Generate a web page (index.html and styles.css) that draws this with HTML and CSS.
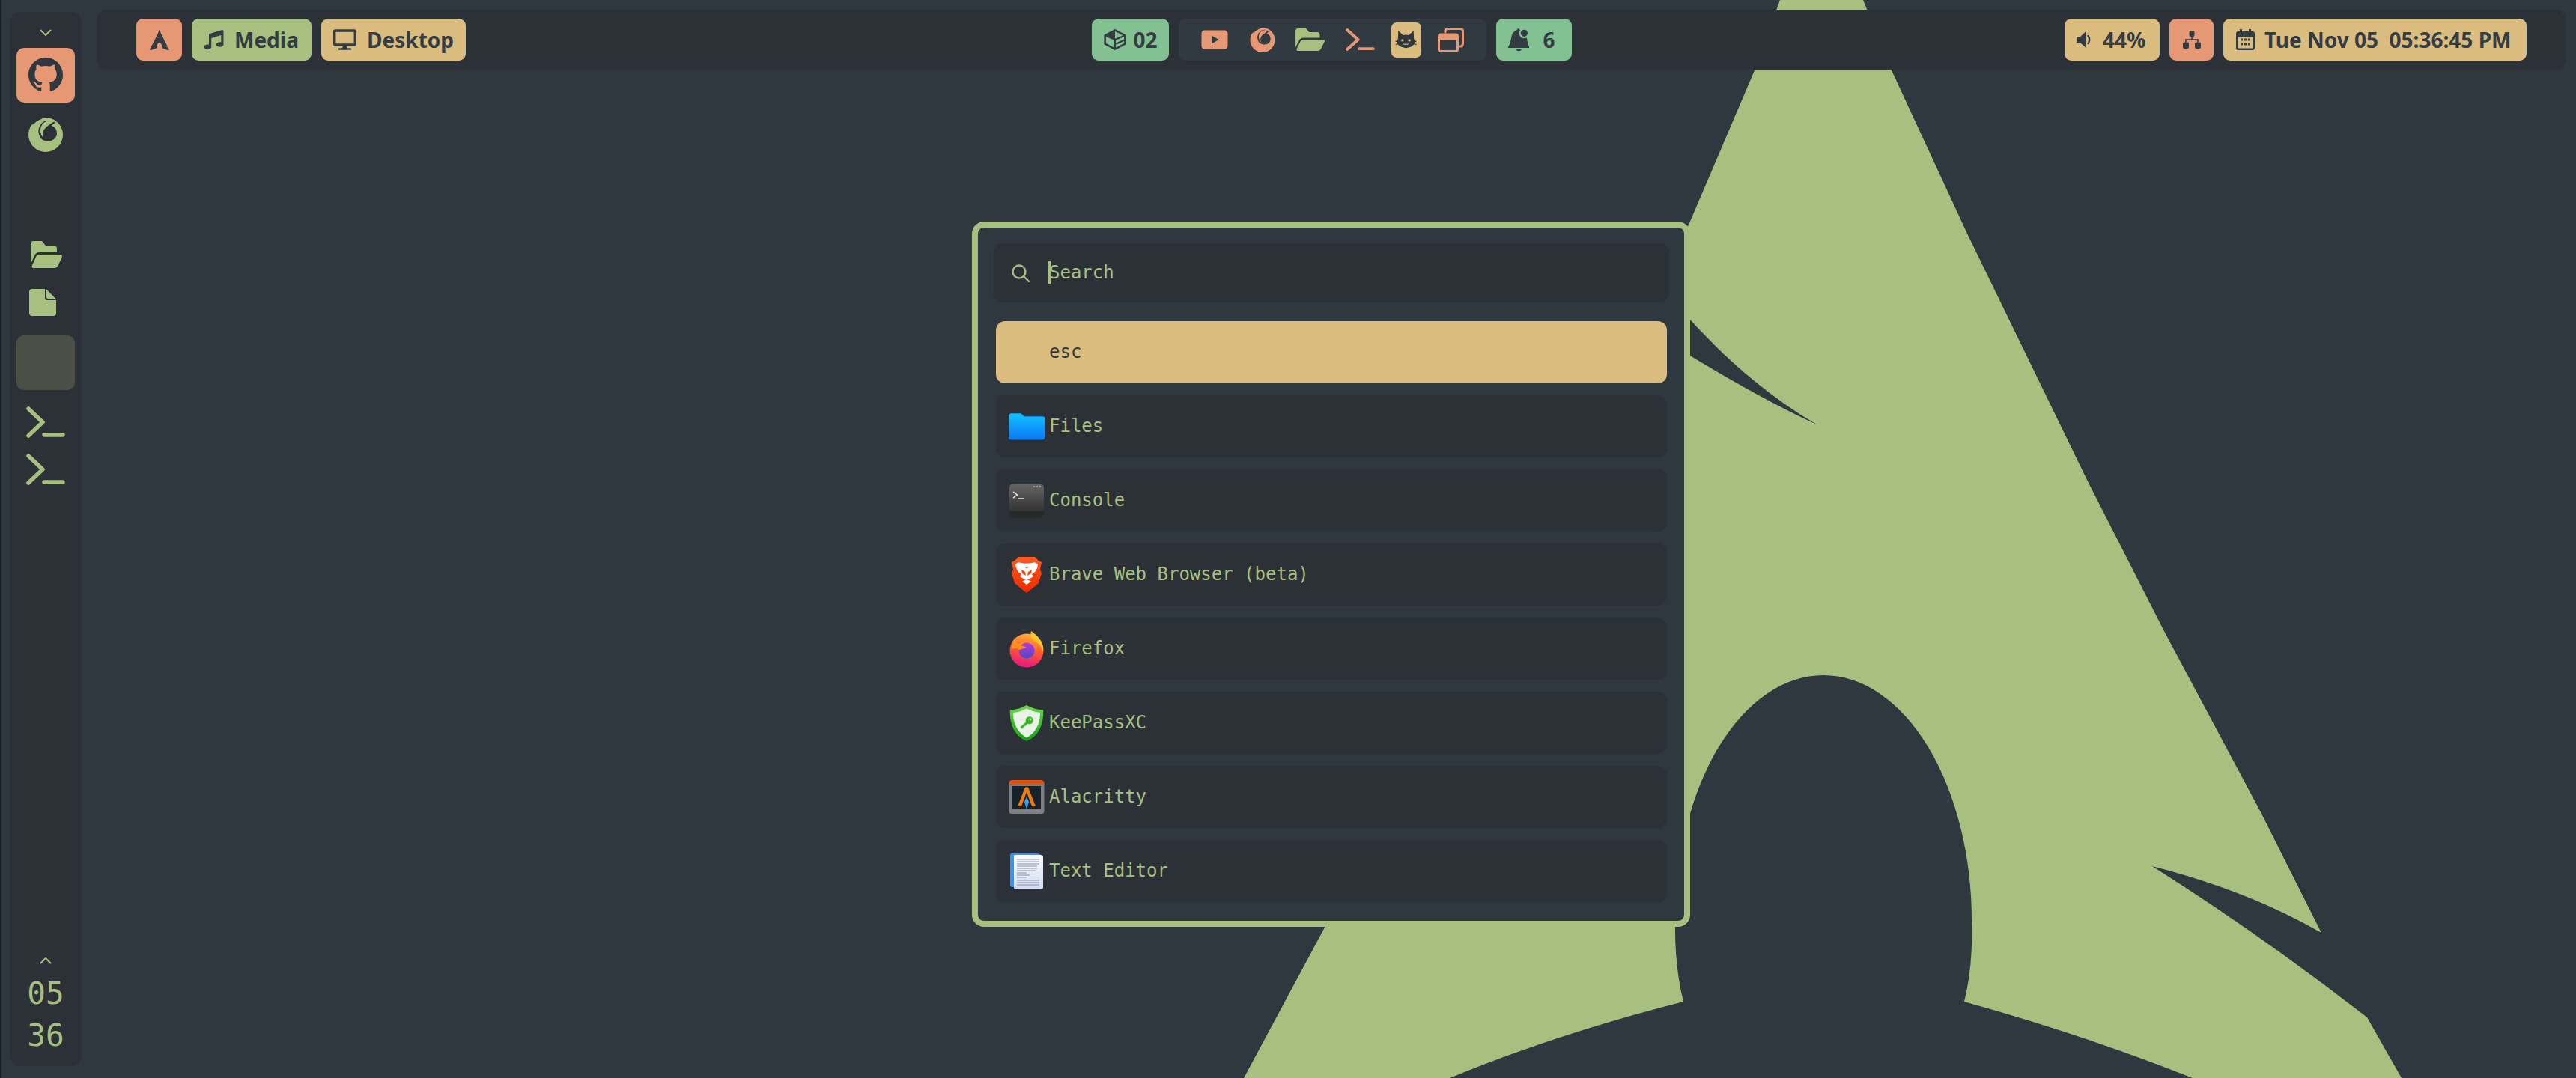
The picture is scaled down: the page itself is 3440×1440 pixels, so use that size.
FILE: index.html
```html
<!DOCTYPE html>
<html lang="en">
<head>
<meta charset="utf-8">
<title>Desktop</title>
<link rel="stylesheet" href="styles.css">
</head>
<body>
<svg class="defs" width="0" height="0" aria-hidden="true">
  <defs>
    <symbol id="i-arch" viewBox="1600 -150 1680 1640">
      <path fill-rule="evenodd" d="M2432 -140L2377 0L2343 94L2256 298Q2020 790 1770 1237L1661 1440L1640 1490H1870L1936 1440Q2076 1382 2248 1338Q2236 1290 2237 1230A198 328 0 0 1 2633 1230Q2635 1290 2623 1338Q2788 1384 2928 1440L3000 1490H3230L3207 1440L3161 1359Q3018 1248 2874 1157Q3003 1190 3100 1246L3018 1083L2891 845L2788 643L2627 312L2526 94L2488 0ZM2200 360Q2310 500 2426 567Q2340 528 2200 440Z"/>
    </symbol>
    <symbol id="i-firefox" viewBox="0 0 138 138">
      <path fill="currentColor" d="M69 0A69 69 0 1 1 0 69Q0 50 8 36Q12 30 22 22L16 32Q30 14 52 6Q60 2 69 0Z"/>
      <path d="M108 20Q84 6 62 16Q40 30 40 58Q42 74 50 84Q62 96 82 94A32 32 0 0 0 114 62A34 34 0 0 0 92 32Q100 24 108 20Z" fill="var(--cut)"/>
      <path d="M104 16Q80 8 62 20Q46 34 48 56Q50 72 60 82Q54 66 60 52Q66 40 82 30Q92 22 104 16Z" fill="currentColor"/>
    </symbol>
    <symbol id="i-folder" viewBox="0 0 576 384" preserveAspectRatio="none">
      <path fill="currentColor" d="M572.7 228L500.3 352.2A64 64 0 0 1 445 384H45C26.5 384 15 364 24.3 348L96.7 223.8A64 64 0 0 1 152 192H552C570.5 192 582 212 572.7 228ZM152 160H480V112C480 85.5 458.5 64 432 64H272L208 0H48C21.5 0 0 21.5 0 48V326L69 207.6C86.2 178.2 118 160 152 160Z"/>
    </symbol>
    <symbol id="i-term" viewBox="0 0 52 42" preserveAspectRatio="none">
      <path d="M3 3L22 21L3 39M24 38H49" fill="none" stroke="currentColor" stroke-width="5.5" stroke-linecap="round" stroke-linejoin="round"/>
    </symbol>
  </defs>
</svg>

<svg class="wallpaper" viewBox="0 0 3440 1440" aria-hidden="true">
  <path fill-rule="evenodd" fill="#a7c080" d="M2432 -140L2377 0L2343 94L2256 298Q2020 790 1770 1237L1661 1440L1640 1490H1870L1936 1440Q2076 1382 2248 1338Q2236 1290 2237 1230A198 328 0 0 1 2633 1230Q2635 1290 2623 1338Q2788 1384 2928 1440L3000 1490H3230L3207 1440L3161 1359Q3018 1248 2874 1157Q3003 1190 3100 1246L3018 1083L2891 845L2788 643L2627 312L2526 94L2488 0ZM2200 360Q2310 500 2426 567Q2340 528 2200 440Z"/>
</svg>

<div class="desktop">
  <aside class="dock">
    <div class="dock-top">
      <div class="chev-row">
        <svg class="chev" viewBox="0 0 16 10"><path d="M1.5 1.5L8 8L14.5 1.5" fill="none" stroke="currentColor" stroke-width="2" stroke-linecap="round" stroke-linejoin="round"/></svg>
      </div>
      <div class="dock-group">
        <div class="slot"><div class="tile tile-orange">
          <svg class="ico-46" viewBox="0 0 16 16"><path fill="#2f373f" d="M8 0C3.58 0 0 3.58 0 8c0 3.54 2.29 6.53 5.47 7.59.4.07.55-.17.55-.38 0-.19-.01-.82-.01-1.49-2.01.37-2.53-.49-2.69-.94-.09-.23-.48-.94-.82-1.13-.28-.15-.68-.52-.01-.53.63-.01 1.08.58 1.23.82.72 1.21 1.87.87 2.33.66.07-.52.28-.87.51-1.07-1.78-.2-3.64-.89-3.64-3.95 0-.87.31-1.59.82-2.15-.08-.2-.36-1.02.08-2.12 0 0 .67-.21 2.2.82.64-.18 1.32-.27 2-.27.68 0 1.36.09 2 .27 1.53-1.04 2.2-.82 2.2-.82.44 1.1.16 1.92.08 2.12.51.56.82 1.27.82 2.15 0 3.07-1.87 3.75-3.65 3.95.29.25.54.73.54 1.48 0 1.07-.01 1.93-.01 2.2 0 .21.15.46.55.38A8.013 8.013 0 0016 8c0-4.42-3.58-8-8-8z"/></svg>
        </div></div>
        <div class="slot"><svg class="ico-46 green cut-bar"><use href="#i-firefox"/></svg></div>
        <div class="slot"></div>
      </div>
      <div class="dock-group">
        <div class="slot-sm"><svg class="dock-folder green"><use href="#i-folder"/></svg></div>
        <div class="slot-sm">
          <svg class="dock-doc" viewBox="0 0 36 36"><path fill="#a7c080" d="M4 0H21V12Q21 15 24 15H36V32Q36 36 32 36H4Q0 36 0 32V4Q0 0 4 0ZM23 0.5L35.5 13H25Q23 13 23 11Z"/></svg>
        </div>
      </div>
      <div class="dock-group">
        <div class="slot"><div class="tile tile-muted"></div></div>
      </div>
      <div class="dock-group">
        <div class="slot-term"><svg class="dock-term green"><use href="#i-term"/></svg></div>
        <div class="slot-term"><svg class="dock-term green"><use href="#i-term"/></svg></div>
      </div>
    </div>
    <div class="dock-bottom">
      <div class="chev-up-row">
        <svg class="chev" viewBox="0 0 16 10"><path d="M1.5 8.5L8 2L14.5 8.5" fill="none" stroke="currentColor" stroke-width="2" stroke-linecap="round" stroke-linejoin="round"/></svg>
      </div>
      <div class="clock-line">05</div>
      <div class="clock-line">36</div>
    </div>
  </aside>

  <div class="main">
    <header class="topbar">
      <div class="bar-left">
        <div class="pill pill-orange pill-arch"><svg class="i-arch-sm"><use href="#i-arch"/></svg></div>
        <div class="pill pill-green pill-media">
          <svg class="i-music" viewBox="0 0 512 512"><path fill="currentColor" d="M511.99 32.01c0-21.71-21.1-37.01-41.6-30.51L150.4 96c-13.3 4.2-22.4 16.5-22.4 30.5v261.42c-10.05-2.38-20.72-3.92-32-3.92-53.02 0-96 28.65-96 64s42.98 64 96 64 96-28.65 96-64V214.31l256-75.02v184.63c-10.05-2.38-20.72-3.92-32-3.92-53.02 0-96 28.65-96 64s42.98 64 96 64 96-28.65 96-64l-.01-351.99z"/></svg>
          <span>Media</span>
        </div>
        <div class="pill pill-yellow pill-desktop">
          <svg class="i-desktop" viewBox="0 0 576 512"><path fill="currentColor" d="M528 0H48C21.5 0 0 21.5 0 48v320c0 26.5 21.5 48 48 48h192l-16 48h-72c-13.3 0-24 10.7-24 24s10.7 24 24 24h272c13.3 0 24-10.7 24-24s-10.7-24-24-24h-72l-16-48h192c26.5 0 48-21.5 48-48V48c0-26.5-21.5-48-48-48zm-16 352H64V64h448v288z"/></svg>
          <span>Desktop</span>
        </div>
      </div>

      <div class="bar-center">
        <div class="pill pill-aqua pill-ws">
          <svg class="i-cube" viewBox="-4 -4 92 88"><path d="M42 0L84 22V58L42 80L0 58V22Z" fill="none" stroke="currentColor" stroke-width="8" stroke-linejoin="round"/><path d="M42 0L0 22L42 40Z" fill="currentColor"/><path d="M0 22L42 40L84 22M42 40V80M46 58L80 42" fill="none" stroke="currentColor" stroke-width="7"/></svg>
          <span>02</span>
        </div>
        <div class="tray">
          <svg class="t-yt" viewBox="0 0 36 26"><path fill="#e69875" d="M5 0.5H31Q35.5 0.5 35.5 5V21Q35.5 25.5 31 25.5H5Q0.5 25.5 0.5 21V5Q0.5 0.5 5 0.5Z"/><path fill="#2f373f" d="M14 7.5L23.5 13L14 18.5Z"/></svg>
          <svg class="t-ff orange cut-tray"><use href="#i-firefox"/></svg>
          <svg class="t-folder green"><use href="#i-folder"/></svg>
          <svg class="t-term orange"><use href="#i-term"/></svg>
          <div class="cat-tile">
            <svg class="t-cat" viewBox="0 0 30 28"><path fill="#2f373f" d="M4 1L11 7.5Q15 6.5 19 7.5L26 1L26.5 13Q28 15 27.5 18Q26 25 15 26Q4 25 2.5 18Q2 15 3.5 13Z"/><circle cx="10" cy="15" r="1.8" fill="#dbbc7f"/><circle cx="20" cy="15" r="1.8" fill="#dbbc7f"/><path d="M11.5 20Q13.5 22 15 20Q16.5 22 18.5 20" fill="none" stroke="#dbbc7f" stroke-width="1.2"/><path d="M0 16L4 17.5M0 21L4 20M30 16L26 17.5M30 21L26 20" stroke="#2f373f" stroke-width="1.3"/></svg>
          </div>
          <svg class="t-win" viewBox="0 0 35 33"><path d="M10 6V4.5Q10 1.5 13 1.5H30Q33.5 1.5 33.5 5V21Q33.5 25 30 25" fill="none" stroke="#e69875" stroke-width="3" stroke-linecap="round"/><path d="M3.5 9H24Q26.5 9 26.5 11.5V29Q26.5 31.5 24 31.5H3.5Q1.5 31.5 1.5 29V11.5Q1.5 9 3.5 9Z" fill="none" stroke="#e69875" stroke-width="3"/><path d="M1.5 16V11Q1.5 8 4 8H24Q26.5 8 26.5 11V16Z" fill="#e69875"/></svg>
        </div>
        <div class="pill pill-aqua pill-bell">
          <svg class="i-bell" viewBox="0 0 85 93"><path fill="currentColor" d="M37 2Q45 0 47 6Q72 12 76 42Q78 62 85 76V80H0V76Q10 62 12 42Q14 14 37 6Z"/><path fill="currentColor" d="M30 84H56Q52 93 43 93Q34 93 30 84Z"/><circle cx="65" cy="20" r="21" fill="#83c092"/><circle cx="65" cy="20" r="14" fill="currentColor"/></svg>
          <span>6</span>
        </div>
      </div>

      <div class="bar-right">
        <div class="pill pill-yellow pill-vol">
          <svg class="i-vol" viewBox="0 0 21 24"><path fill="currentColor" d="M0 8H5L12 1.5V22.5L5 16H0Z"/><path d="M15.5 7Q19 12 15.5 17" fill="none" stroke="currentColor" stroke-width="2.4" stroke-linecap="round"/></svg>
          <span>44%</span>
        </div>
        <div class="pill pill-orange pill-net">
          <svg class="i-net" viewBox="0 0 24 24"><rect x="8.5" y="0" width="7" height="8" rx="2" fill="currentColor"/><rect x="0" y="15.5" width="8" height="8.5" rx="2" fill="currentColor"/><rect x="16" y="15.5" width="8" height="8.5" rx="2" fill="currentColor"/><path d="M12 8V12M4 15.5V12H20V15.5" fill="none" stroke="currentColor" stroke-width="1.6"/></svg>
        </div>
        <div class="pill pill-yellow pill-date">
          <svg class="i-cal" viewBox="0 0 25 28"><path fill="currentColor" fill-rule="evenodd" d="M5 0H8V3H17V0H20V3H22Q25 3 25 6V25Q25 28 22 28H3Q0 28 0 25V6Q0 3 3 3H5ZM2.5 10V24Q2.5 25.5 4 25.5H21Q22.5 25.5 22.5 24V10Z"/><g fill="currentColor"><rect x="6" y="12.5" width="3" height="3"/><rect x="11" y="12.5" width="3" height="3"/><rect x="16" y="12.5" width="3" height="3"/><rect x="6" y="18.5" width="3" height="3"/><rect x="11" y="18.5" width="3" height="3"/><rect x="16" y="18.5" width="3" height="3"/></g></svg>
          <span class="date-text">Tue Nov 05  05:36:45 PM</span>
        </div>
      </div>
    </header>
  </div>
</div>

<section class="launcher">
  <div class="search">
    <svg class="i-search" viewBox="0 0 24 24"><circle cx="10" cy="10" r="8.5" fill="none" stroke="currentColor" stroke-width="2.4"/><path d="M16.5 16.5L23 23" stroke="currentColor" stroke-width="2.4" stroke-linecap="round"/></svg>
    <span class="search-text">Search</span>
  </div>
  <ul class="apps">
    <li class="app app-active"><span class="app-icon"></span><span class="app-name">esc</span></li>
    <li class="app">
      <span class="app-icon">
        <svg class="app-svg" viewBox="0 0 48 48"><defs><linearGradient id="g-files" x1="0" y1="0" x2="0" y2="1"><stop offset="0" stop-color="#12c2ff"/><stop offset="1" stop-color="#0a78f5"/></linearGradient></defs><path fill="#0a8ae0" d="M3 6.5H17L21 10H45Q48 10 48 13V20H0V9Q0 6.5 3 6.5Z"/><path fill="url(#g-files)" d="M3 6.5H16L21 11H48V38.5Q48 41.5 45 41.5H3Q0 41.5 0 38.5V9Q0 6.5 3 6.5Z"/></svg>
      </span>
      <span class="app-name">Files</span>
    </li>
    <li class="app">
      <span class="app-icon">
        <svg class="app-svg" viewBox="0 0 48 48"><defs><linearGradient id="g-con" x1="0" y1="0" x2="0" y2="1"><stop offset="0" stop-color="#666"/><stop offset="1" stop-color="#333"/></linearGradient></defs><rect x="1" y="1" width="46" height="46" rx="6" fill="#252a2a"/><path d="M1 7Q1 1 7 1H41Q47 1 47 7V38H1Z" fill="url(#g-con)"/><path d="M6 12L11.5 16L6 20M13 21H21" fill="none" stroke="#eee" stroke-width="1.5"/><circle cx="34" cy="5" r="1" fill="#aaa"/><circle cx="38" cy="5" r="1" fill="#aaa"/><circle cx="42" cy="5" r="1" fill="#aaa"/></svg>
      </span>
      <span class="app-name">Console</span>
    </li>
    <li class="app">
      <span class="app-icon">
        <svg class="app-svg" viewBox="0 0 48 48"><defs><linearGradient id="g-brave" x1="0" y1="0" x2="0" y2="1"><stop offset="0" stop-color="#ff5a1f"/><stop offset="1" stop-color="#f02a00"/></linearGradient></defs><path fill="url(#g-brave)" d="M13 0H35L40 5L44 7L42 17L44 22L40 35L28 45L24 48L20 45L8 35L4 22L6 17L4 7L8 5Z"/><path fill="#fff" d="M13 7L19 8.5H29L35 7L39 10L38 15L35 20L31 23L33 26L26 30.5H22L15 26L17 23L13 20L10 15L9 10Z"/><path fill="#f5400b" d="M17 17L22 20L23 25L18 22ZM31 17L26 20L25 25L30 22ZM20 13H28L24 15Z"/><path fill="#fff" d="M18 32.5L24 30L30 32.5L24 37Z"/></svg>
      </span>
      <span class="app-name">Brave Web Browser (beta)</span>
    </li>
    <li class="app">
      <span class="app-icon">
        <svg class="app-svg" viewBox="0 0 48 48"><defs><linearGradient id="g-ff" x1=".6" y1="0" x2=".4" y2="1"><stop offset="0" stop-color="#ffb52e"/><stop offset=".5" stop-color="#ff5634"/><stop offset="1" stop-color="#e31587"/></linearGradient><linearGradient id="g-ffb" x1=".5" y1="0" x2=".5" y2="1"><stop offset="0" stop-color="#b833e1"/><stop offset="1" stop-color="#4a4fc0"/></linearGradient></defs><circle cx="24" cy="26" r="22.5" fill="url(#g-ff)"/><path fill="#ffc52a" d="M30 0C38 6 48 14 46 28C44 18 36 14 32 12C29 8 29 4 30 0Z"/><path fill="#ff9a24" d="M8 9L12 18L22 13L17 21L4 24Z"/><circle cx="24" cy="26" r="10.5" fill="url(#g-ffb)"/><path fill="#ff8a1e" d="M6 19Q16 17 24 22L14 25Z"/></svg>
      </span>
      <span class="app-name">Firefox</span>
    </li>
    <li class="app">
      <span class="app-icon">
        <svg class="app-svg" viewBox="0 0 48 54"><defs><linearGradient id="g-kp" x1="0" y1="0" x2="0" y2="1"><stop offset="0" stop-color="#6cd94a"/><stop offset="1" stop-color="#12a010"/></linearGradient></defs><path fill="url(#g-kp)" d="M24 1Q34 7 48 8Q49 42 24 53Q-1 42 0 8Q14 7 24 1Z"/><path fill="#e8f5e6" d="M24 6Q33 11 43.5 12Q43 38 24 48Q5 38 4.5 12Q15 11 24 6Z"/><circle cx="28" cy="23" r="5.5" fill="#3fb52e"/><path d="M25 26L16 34" stroke="#3fb52e" stroke-width="3.5"/><circle cx="29.5" cy="21.5" r="1.4" fill="#e8f5e6"/></svg>
      </span>
      <span class="app-name">KeePassXC</span>
    </li>
    <li class="app">
      <span class="app-icon">
        <svg class="app-svg" viewBox="0 0 48 48"><rect x="0.5" y="1" width="47" height="46" rx="5" fill="#7d7f82"/><path d="M0.5 7V6Q0.5 1 5 1H43Q47.5 1 47.5 6V7Z" fill="#e0530e"/><rect x="5" y="9" width="38" height="31" fill="#15222c"/><path d="M12 36L22 10.5H26L36 36H31L24 17L17 36Z" fill="#f07c0a"/><path d="M24 23L27 30L24 40L21 30Z" fill="#3f9fea"/></svg>
      </span>
      <span class="app-name">Alacritty</span>
    </li>
    <li class="app">
      <span class="app-icon">
        <svg class="app-svg" viewBox="0 0 48 50"><defs><linearGradient id="g-te" x1="0" y1="0" x2="0" y2="1"><stop offset="0" stop-color="#fafbfe"/><stop offset="1" stop-color="#d2dcf2"/></linearGradient></defs><path d="M6 0H36L46 4V46H6Q2 46 2 44V4Q2 0 6 0Z" fill="#3a8ff0"/><path d="M8 3H42Q46 3 46 7V46Q46 49 43 49H10Q7 49 7 46V4Z" fill="url(#g-te)"/><path d="M11 9H41M11 12H41M11 15H41M11 18H38M11 21H38M11 24H36M11 27H24M11 30H28M11 33H24M11 37H41M11 40H41M11 43H41" stroke="#8a94a6" stroke-width="1"/></svg>
      </span>
      <span class="app-name">Text Editor</span>
    </li>
  </ul>
</section>
</body>
</html>
```

FILE: styles.css
```css
:root {
  --bg: #2f373f;
  --panel: #2b3137;
  --green: #a7c080;
  --orange: #e69875;
  --yellow: #dbbc7f;
  --aqua: #83c092;
  --ink: #333c43;
}
* { box-sizing: border-box; }
html, body { margin: 0; padding: 0; width: 3440px; height: 1440px; overflow: hidden; }
body { background: var(--bg); position: relative; font-family: "Noto Sans", sans-serif; color: var(--ink); }
.defs { position: absolute; }
.wallpaper { position: absolute; left: 0; top: 0; width: 3440px; height: 1440px; display: block; }
.green { color: var(--green); }
.orange { color: var(--orange); }
.cut-bar { --cut: #2b3137; }
.cut-tray { --cut: #313a41; }

.desktop { position: relative; display: flex; height: 1440px; border-left: 2px solid #1b2024; }

/* dock */
.dock { width: 96px; margin: 16px 0 16px 11px; background: var(--panel); border-radius: 14px; display: flex; flex-direction: column; justify-content: space-between; color: var(--green); flex: none; }
.dock-top { display: flex; flex-direction: column; gap: 8px; }
.chev-row { height: 36.5px; padding-top: 23px; display: flex; justify-content: center; align-items: flex-start; margin-bottom: -0.5px; }
.chev { width: 16px; height: 10px; display: block; }
.dock-group { display: flex; flex-direction: column; }
.slot { height: 80px; display: flex; align-items: center; justify-content: center; }
.slot-sm { height: 64px; display: flex; align-items: center; justify-content: center; }
.slot-term { height: 63px; display: flex; align-items: center; justify-content: center; }
.tile { width: 78px; height: 73px; border-radius: 10px; display: flex; align-items: center; justify-content: center; }
.tile-orange { background: var(--orange); }
.tile-muted { background: #4c4f45; }
.ico-46 { width: 46px; height: 46px; display: block; }
.dock-folder { width: 42px; height: 36px; display: block; margin-left: 2px; }
.dock-doc { width: 36px; height: 36px; display: block; margin-right: 8px; }
.dock-term { width: 52px; height: 42px; display: block; }
.dock-bottom { padding-bottom: 13px; }
.chev-up-row { height: 32px; display: flex; align-items: center; justify-content: center; }
.clock-line { height: 56px; text-align: center; font: 41px/56px "DejaVu Sans Mono", monospace; }

/* top bar */
.main { flex: 1; min-width: 0; padding: 13px 14px 0 20px; }
.topbar { height: 80px; background: var(--panel); border-radius: 14px; display: grid; grid-template-columns: 1fr auto 1fr; align-items: center; padding: 0 52px 0 53px; }
.bar-left, .bar-center, .bar-right { display: flex; align-items: center; gap: 13px; }
.bar-right { justify-content: flex-end; }
.pill { height: 56px; border-radius: 9px; display: flex; align-items: center; font: 700 28px/56px "Noto Sans", sans-serif; color: var(--ink); white-space: pre; }
.pill-orange { background: var(--orange); }
.pill-green { background: var(--green); }
.pill-yellow { background: var(--yellow); }
.pill-aqua { background: var(--aqua); }
.pill-arch { width: 61px; justify-content: center; }
.i-arch-sm { width: 28px; height: 28px; fill: var(--ink); display: block; }
.pill-media { width: 160px; padding-left: 16px; gap: 14px; }
.i-music { width: 27px; height: 26px; display: block; }
.pill-desktop { width: 193px; padding-left: 16px; gap: 14px; }
.i-desktop { width: 31px; height: 28px; display: block; }
.pill-ws { width: 103px; padding-left: 16px; gap: 10px; }
.i-cube { width: 30px; height: 28px; display: block; }
.tray { width: 411px; height: 56px; background: #313a41; border-radius: 9px; display: flex; align-items: center; padding-left: 30px; }
.t-yt { width: 36px; height: 26px; display: block; margin-right: 29px; }
.t-ff { width: 34px; height: 33px; display: block; margin-right: 27px; }
.t-folder { width: 39px; height: 30px; display: block; margin-right: 28px; }
.t-term { width: 39px; height: 30px; display: block; margin-right: 22px; }
.cat-tile { width: 40px; height: 47px; background: var(--yellow); border-radius: 7px; display: flex; align-items: center; justify-content: center; margin-right: 22px; }
.t-cat { width: 29px; height: 26px; display: block; }
.t-win { width: 35px; height: 33px; display: block; }
.pill-bell { width: 101px; padding-left: 16px; gap: 19px; }
.i-bell { width: 28px; height: 32px; display: block; }
.pill-vol { width: 127px; padding-left: 16px; gap: 14px; }
.i-vol { width: 21px; height: 24px; display: block; }
.pill-net { width: 59px; justify-content: center; }
.i-net { width: 24px; height: 24px; display: block; }
.pill-date { width: 405px; padding-left: 17px; gap: 13px; }
.i-cal { width: 25px; height: 28px; display: block; }

/* launcher */
.launcher { position: absolute; left: 1298px; top: 296px; width: 959px; height: 942px; background: var(--bg); border: 8px solid var(--green); border-radius: 16px; padding: 21px 20px 0 21px; font: 24px "DejaVu Sans Mono", monospace; color: var(--green); }
.search { height: 79px; background: var(--panel); border-radius: 12px; display: flex; align-items: center; padding-left: 24px; gap: 26px; }
.i-search { width: 24px; height: 24px; display: block; flex: none; }
.search-text { position: relative; margin-bottom: 2px; }
.search-text::before { content: ""; position: absolute; left: -1px; top: -2px; width: 3px; height: 32px; background: var(--green); }
.apps { list-style: none; margin: 25px 3px 0; padding: 0; display: flex; flex-direction: column; gap: 16px; }
.app { height: 83px; background: var(--panel); border-radius: 12px; display: flex; align-items: center; padding-left: 17px; gap: 6px; }
.app-name { margin-bottom: 2px; }
.app-active { background: var(--yellow); color: var(--ink); }
.app-icon { width: 48px; height: 52px; display: flex; align-items: center; justify-content: center; flex: none; }
.app-svg { width: 48px; height: 50px; display: block; }
```
